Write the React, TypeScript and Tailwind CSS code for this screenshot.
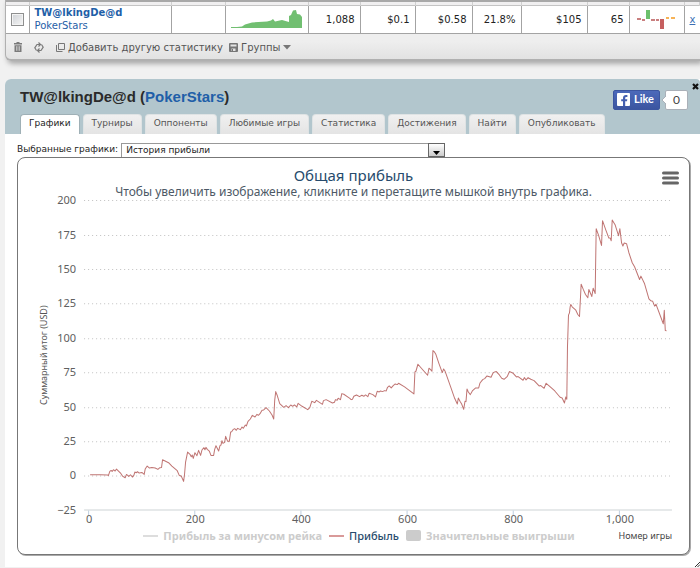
import type { ReactNode } from "react";
import clsx from "clsx";

const TABS = [
  "Графики",
  "Турниры",
  "Оппоненты",
  "Любимые игры",
  "Статистика",
  "Достижения",
  "Найти",
  "Опубликовать",
];

const Y_TICKS = [
  { label: "200", y: 200 },
  { label: "175", y: 235 },
  { label: "150", y: 269 },
  { label: "125", y: 303 },
  { label: "100", y: 338 },
  { label: "75", y: 372 },
  { label: "50", y: 407 },
  { label: "25", y: 441 },
  { label: "0", y: 475 },
];

const X_TICKS = [
  { label: "0", x: 89 },
  { label: "200", x: 195 },
  { label: "400", x: 301 },
  { label: "600", x: 407 },
  { label: "800", x: 513 },
  { label: "1,000", x: 619 },
];

// profit line, in thirds of a unit, y measured from the 100 USD gridline
const PROFIT =
  "270,403 300,403 322,404 325,405 329,393 333,390 336,393 340,388 345,392 349,386 355,392 362,399 368,408 375,412 379,402 386,408 391,403 397,410 401,405 404,395 408,397 412,394 417,398 425,396 432,402 435,386 441,377 448,383 455,381 465,383 473,387 479,382 484,381 487,358 505,367 515,377 531,391 537,405 543,407 550,423 553,400 556,365 562,335 570,343 573,349 576,344 579,354 584,337 590,346 595,330 601,345 605,329 611,322 614,328 617,321 621,327 627,332 632,345 640,345 643,328 647,316 655,332 659,316 662,314 665,301 668,309 673,306 676,288 682,303 687,303 691,275 694,274 698,268 703,265 708,270 712,264 720,268 725,260 729,264 735,254 738,257 743,243 750,236 756,225 764,230 770,222 774,225 779,220 785,210 790,209 797,202 807,212 815,224 820,236 823,180 826,154 830,164 838,190 850,201 857,196 864,202 871,194 877,198 882,194 889,200 893,189 905,198 922,208 928,202 934,183 943,187 948,180 966,192 969,181 977,178 996,188 1002,186 1005,178 1010,180 1013,174 1020,178 1024,160 1030,162 1048,174 1052,178 1056,177 1060,168 1068,164 1077,169 1084,165 1090,168 1095,164 1102,169 1106,159 1117,163 1125,170 1130,153 1136,155 1140,152 1146,154 1152,151 1157,152 1161,141 1166,137 1172,143 1178,136 1184,131 1190,133 1194,129 1212,140 1227,151 1240,161 1243,95 1246,93 1252,72 1265,87 1281,105 1285,84 1290,88 1294,93 1297,31 1302,36 1306,43 1315,70 1325,97 1329,86 1333,92 1350,140 1362,174 1370,191 1373,173 1378,183 1383,191 1389,207 1393,183 1396,184 1399,146 1403,155 1409,163 1415,152 1425,143 1434,143 1438,128 1446,118 1452,115 1459,107 1471,111 1477,98 1482,95 1487,94 1496,104 1503,114 1510,117 1520,108 1526,94 1536,98 1547,110 1552,109 1567,120 1571,112 1576,119 1582,112 1590,117 1600,121 1615,137 1620,136 1630,144 1636,129 1645,137 1662,152 1678,171 1684,173 1691,188 1695,170 1698,177 1700,20 1701,-10 1703,-75 1706,-82 1708,-100 1710,-107 1714,-100 1725,-90 1731,-77 1736,-71 1741,-168 1747,-153 1754,-137 1761,-127 1764,-152 1773,-131 1777,-156 1783,-140 1786,-334 1793,-315 1802,-284 1805,-358 1815,-330 1824,-306 1828,-306 1831,-298 1834,-360 1843,-345 1853,-313 1857,-334 1862,-292 1866,-282 1870,-291 1877,-289 1884,-262 1894,-232 1901,-220 1916,-182 1920,-192 1931,-169 1944,-124 1950,-118 1955,-117 1961,-102 1965,-108 1980,-68 1987,-49 1990,-90 1993,-29 1997,-28";

function Cell({ children, className }: { children?: ReactNode; className?: string }) {
  return (
    <td className={clsx("border-r border-[#a3a3a3] px-[5px] text-right align-middle", className)}>
      {children}
    </td>
  );
}

function PlayerTable() {
  return (
    <table className="w-full table-fixed border-collapse border-t-2 border-[#a8a8a8] bg-white text-[10px] leading-[13px] text-[#222]">
      <colgroup>
        <col className="w-[23px]" />
        <col className="w-[142px]" />
        <col className="w-[54px]" />
        <col className="w-[83px]" />
        <col className="w-[52px]" />
        <col className="w-[55px]" />
        <col className="w-[57px]" />
        <col className="w-[49px]" />
        <col className="w-[66px]" />
        <col className="w-[42px]" />
        <col className="w-[55px]" />
        <col />
      </colgroup>
      <tbody>
        <tr className="h-[4px] border-b border-[#c4c4c4] bg-[#f0eff0]">
          {Array.from({ length: 12 }, (_, i) => (
            <td key={i} className="border-r border-[#d0d0d0] p-0" />
          ))}
        </tr>
        <tr className="h-[28px] border-b border-[#a3a3a3]">
          <Cell className="px-0! text-center!">
            <input
              type="checkbox"
              aria-label="Выбрать TW@lkingDe@d"
              className="mx-auto block size-[13px] appearance-none border border-[#8e8f8f] bg-linear-to-br from-[#cfd2d6] to-[#f6f6f6] shadow-[inset_0_0_0_1px_#f4f4f4]"
            />
          </Cell>
          <Cell className="text-left!">
            <a href="#player" className="block font-bold text-[#1f5fa8]">
              TW@lkingDe@d
            </a>
            <a href="#site" className="block text-[#1f5fa8]">
              PokerStars
            </a>
          </Cell>
          <Cell />
          <Cell>
            <svg viewBox="0 0 72 18" className="block h-[18px] w-[72px]">
              <path
                d="M0 18V17H6L11 16.500L14 14.500L21 12.500L36 11.500L40 10.500L42 9L44 11.500L51 10L58 12V6L60 5L62 .5L65 0L66 4L69 4.500L71 7V18Z"
                fill="#71bf71"
              />
            </svg>
          </Cell>
          <Cell>1,088</Cell>
          <Cell>$0.1</Cell>
          <Cell>$0.58</Cell>
          <Cell>21.8%</Cell>
          <Cell>$105</Cell>
          <Cell>65</Cell>
          <Cell>
            <svg viewBox="0 0 40 20" className="block h-[20px] w-[40px]">
              <path d="M2 10h4M7 11h3M16 11h4M21 11h3" stroke="#b85555" strokeWidth="1.5" />
              <path d="M31 9h3M36 9h4" stroke="#f59b20" strokeWidth="1.5" />
              <rect x="11" y="1" width="4" height="9" fill="#6cc06c" />
              <rect x="25" y="10" width="4" height="10" fill="#c65f5f" />
            </svg>
          </Cell>
          <Cell className="border-r-0 text-left!">
            <a href="#remove" className="text-[#3a6fb5] underline">
              x
            </a>
          </Cell>
        </tr>
      </tbody>
    </table>
  );
}

function Toolbar() {
  return (
    <div className="flex h-[25px] items-center pt-[2px] pl-2 text-[10px] text-[#555]">
      <button type="button" aria-label="Удалить" className="mr-[12px]">
        <svg width="8" height="10" viewBox="0 0 8 10">
          <path d="M2.500 0h3v1H8v1.500H0V1h2.500zM.5 3.200h7V10h-7z" fill="#7a7a7a" />
          <path d="M2.500 4.200v4.600M4 4.200v4.600M5.500 4.200v4.600" stroke="#d8d8d8" strokeWidth=".7" />
        </svg>
      </button>
      <button type="button" aria-label="Обновить" className="mr-[12px]">
        <svg width="10" height="11" viewBox="0 0 10 11" fill="none" stroke="#7a7a7a" strokeWidth="1.200">
          <path d="M2.500 8.500L.8 5.800L3 2.500H6M4.500 .5l2 2-2 2M7.500 2.500L9.200 5.200L7 8.500H4M5.500 6.500l-2 2 2 2" />
        </svg>
      </button>
      <button type="button" className="mr-[6px] flex items-center gap-[3px]">
        <svg width="9" height="9" viewBox="0 0 9 9" fill="none" stroke="#777">
          <path d="M2.500 .5h6v6h-6zM.5 2v6.500h6" />
        </svg>
        Добавить другую статистику
      </button>
      <button type="button" className="flex items-center gap-[3px]">
        <svg width="9" height="9" viewBox="0 0 9 9">
          <rect width="9" height="9" rx="1" fill="#777" />
          <path d="M1.500 1.500h6v2h-6zM2.500 5.500h4V8h-4z" fill="#e4e4e4" />
          <rect x="3" y="6" width="1" height="2" fill="#777" />
        </svg>
        Группы
        <svg width="8" height="5" viewBox="0 0 8 5">
          <path d="M0 0h8L4 4.500z" fill="#777" />
        </svg>
      </button>
    </div>
  );
}

function FacebookLike() {
  return (
    <div className="flex items-center gap-[5px]">
      <button
        type="button"
        className="flex h-[20px] w-[47px] items-center gap-[4px] rounded-xs border border-[#3b55a0] bg-linear-to-b from-[#4c69ba] to-[#3b55a0] px-[3px] font-[Lato,sans-serif] text-[11px] font-bold text-white"
      >
        <svg width="13" height="13" viewBox="0 0 13 13">
          <rect width="13" height="13" rx="1" fill="#fff" />
          <path
            d="M6 13V8.300H4.200V6.300H6V5c0-2 1.100-3 2.900-3h1.500v1.900h-1c-.9 0-1.200.4-1.200 1.200v1.200h2.100l-.3 2H8.200V13z"
            fill="#4560b0"
          />
        </svg>
        Like
      </button>
      <span className="relative flex h-[20px] w-[23px] items-center justify-center rounded-xs border border-[#aab0b8] bg-white font-[Lato,sans-serif] text-[12px] text-[#444]">
        <svg width="4" height="8" viewBox="0 0 4 8" className="absolute top-[5px] -left-[4px]">
          <path d="M4 0L0 4l4 4z" fill="#fff" />
          <path d="M4 0L0 4l4 4" fill="none" stroke="#aab0b8" />
        </svg>
        0
      </span>
    </div>
  );
}

function ProfitPlot() {
  return (
    <svg viewBox="18 198 670 329" className="block w-full overflow-visible text-[11px]" fill="#606060">
      {Y_TICKS.map(({ label, y }) => (
        <g key={label}>
          <path d={`M84 ${y + 0.5}H669`} stroke="#c0c0c0" strokeDasharray="1 3" />
          <text x="76" y={y + 4} textAnchor="end">
            {label}
          </text>
        </g>
      ))}
      <text x="76" y="514" textAnchor="end">
        −25
      </text>
      <path d="M84 509.500H671" stroke="#cdd3d5" />
      {X_TICKS.map(({ label, x }) => (
        <g key={label}>
          <path d={`M${x - 0.5} 510v5`} stroke="#c0d0e0" />
          <text x={x} y="523" textAnchor="middle">
            {label}
          </text>
        </g>
      ))}
      <text
        transform="translate(47 355) rotate(-90)"
        textAnchor="middle"
        className="text-[9px]"
        fill="#555"
      >
        Суммарный итог (USD)
      </text>
      <g transform="translate(0 340) scale(.33333)">
        <polyline
          points={PROFIT}
          fill="none"
          stroke="#aa4643"
          strokeOpacity=".75"
          strokeWidth="3"
          strokeLinejoin="round"
        />
      </g>
    </svg>
  );
}

function ChartCard() {
  return (
    <section className="relative mr-[10px] ml-3 rounded-lg border border-[#777] bg-white pt-[7px] pb-[9px] font-['Noto_Sans',sans-serif] shadow-[1px_1px_0_#aaa]">
      <h2 className="text-center text-[15px] leading-[20px] text-[#274b6d]">Общая прибыль</h2>
      <p className="pt-px text-center text-[12px] leading-[12px] text-[#4d5966]">
        Чтобы увеличить изображение, кликните и перетащите мышкой внутрь графика.
      </p>
      <button type="button" aria-label="Меню графика" className="absolute top-[13px] right-[10px]">
        <svg width="17" height="14" viewBox="0 0 17 14" className="block">
          <path
            d="M1.500 2h14M1.500 7h14M1.500 12h14"
            stroke="#666"
            strokeWidth="3"
            strokeLinecap="round"
          />
        </svg>
      </button>
      <ProfitPlot />
      <div className="flex items-center text-[11px] leading-[18px] font-bold text-[#ccc]">
        <div className="flex-1 pl-7" />
        <div className="flex gap-[7px]">
          <button type="button" className="flex items-center gap-[5px]">
            <span className="h-[2px] w-[15px] bg-[#ddd]" />
            Прибыль за минусом рейка
          </button>
          <button type="button" className="flex items-center gap-[5px] font-medium text-[#274b6d]">
            <span className="h-[2px] w-[15px] bg-[#d99a99]" />
            Прибыль
          </button>
          <button type="button" className="flex items-center gap-[5px]">
            <span className="h-[11px] w-[15px] rounded-xs bg-[#ccc]" />
            Значительные выигрыши
          </button>
        </div>
        <div className="flex-1 pr-[17px] text-right text-[9px] font-normal text-[#444]">
          Номер игры
        </div>
      </div>
    </section>
  );
}

export default function App() {
  return (
    <div className="min-h-screen overflow-hidden bg-[#f1f1f1] pl-[5px] font-['DejaVu_Sans',sans-serif]">
      <div className="rounded-bl-md border-b-2 border-l border-[#b0b0b0] bg-linear-to-b from-[#eee] from-70% to-[#e2e2e2] shadow-[2px_3px_5px_#aaa]">
        <PlayerTable />
        <Toolbar />
      </div>

      <main className="relative mt-[18px] rounded-tl-md bg-white pb-3">
        <header className="rounded-tl-md rounded-tr-sm bg-[#b2c6cd] px-3 pt-[7px]">
          <div className="flex h-[28px] items-center justify-between pl-[3px]">
            <h1 className="pb-1 font-['Liberation_Sans',sans-serif] text-[15px] font-bold text-[#2a2a2a]">
              TW@lkingDe@d (
              <a href="#site" className="text-[#1f5fa8]">
                PokerStars
              </a>
              )
            </h1>
            <FacebookLike />
          </div>
          <nav className="flex gap-[3px] pl-[3px] text-[9px]">
            {TABS.map((tab, i) => (
              <button
                key={tab}
                type="button"
                className={clsx(
                  "h-[20px] rounded-t-sm border border-b-0 px-2 whitespace-nowrap",
                  i === 0
                    ? "border-[#9fb0b6] bg-white text-[#222]"
                    : "border-[#dfe3e4] bg-linear-to-b from-[#f0f0f0] to-[#e4e4e4] text-[#555]",
                )}
              >
                {tab}
              </button>
            ))}
          </nav>
        </header>
        <button type="button" aria-label="Закрыть" className="absolute top-[4px] right-[1px]">
          <svg width="7" height="7" viewBox="0 0 7 7" className="block">
            <path d="M1 1l5 5M6 1L1 6" stroke="#111" strokeWidth="2.200" />
          </svg>
        </button>

        <div className="flex items-center gap-[3px] pt-[9px] pl-3 text-[9px] text-[#222]">
          <label htmlFor="chart">Выбранные графики:</label>
          <div className="relative w-[324px]">
            <select
              id="chart"
              className="block h-[14px] w-full appearance-none border border-b-0 border-[#999] bg-white pl-1 leading-[13px]"
            >
              <option>История прибыли</option>
            </select>
            <span className="pointer-events-none absolute top-0 right-0 flex h-[14px] w-[17px] items-end justify-center border border-[#666] bg-linear-to-b from-white to-[#ccc] pb-[1px]">
              <svg width="7" height="4" viewBox="0 0 7 4">
                <path d="M0 0h7L3.500 4z" />
              </svg>
            </span>
          </div>
        </div>
        <ChartCard />
        <svg width="5" height="5" viewBox="0 0 5 5" className="absolute right-0 bottom-0">
          <path d="M0 5l5-5M2.500 5L5 2.500" stroke="#333" />
        </svg>
      </main>
    </div>
  );
}
